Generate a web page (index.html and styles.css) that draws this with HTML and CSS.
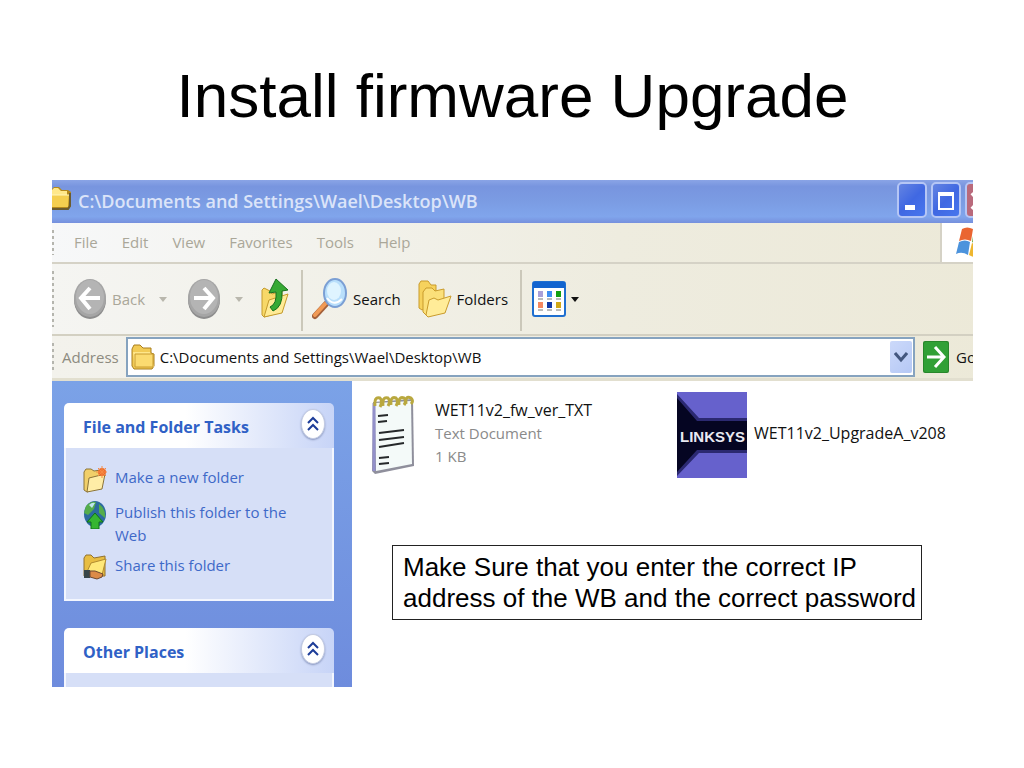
FILE: index.html
```
<!DOCTYPE html>
<html lang="en">
<head>
  <meta charset="UTF-8">
  <meta name="viewport" content="width=device-width, initial-scale=1">
  <title>Install firmware Upgrade</title>
  <link rel="stylesheet" href="styles.css">
</head>
<body>
  <h1>Install firmware Upgrade</h1>

  <main class="window">
    <header class="title-bar">
      <svg class="title-icon" width="20" height="26" viewBox="0 0 20 26">
        <path d="M0 3 L2 1 H7 L10 4 H16 L19 6 V20 L17 23 H0Z" fill="#b58a1c"/>
        <path d="M0 4 L2 2 H6 L9 5 H15 V9 H0Z" fill="#ffe88a"/>
        <path d="M0 9 H17 L16 21 H0Z" fill="#f5cf4f"/>
        <path d="M0 9 H17" stroke="#fff6bb"/>
        <path d="M18 7 V20 L16 23 H0" stroke="#6b5c30" stroke-width="2" fill="none"/>
      </svg>
      <h2>C:\Documents and Settings\Wael\Desktop\WB</h2>
      <div class="window-buttons">
        <button class="win-btn" aria-label="Minimize">
          <svg width="26" height="32" viewBox="0 0 26 32"><rect x="6" y="21" width="10" height="5" fill="#fff"/></svg>
        </button>
        <button class="win-btn" aria-label="Maximize">
          <svg width="26" height="32" viewBox="0 0 26 32"><path d="M6 9 H20 V25 H6Z" fill="none" stroke="#fff" stroke-width="2"/><path d="M5 10 H21" stroke="#fff" stroke-width="4"/></svg>
        </button>
        <button class="win-btn close" aria-label="Close">
          <svg width="26" height="32" viewBox="0 0 26 32"><path d="M5 9 L20 25 M20 9 L5 25" stroke="#fff" stroke-width="4"/></svg>
        </button>
      </div>
    </header>

    <nav class="menu-bar">
      <span class="grip"></span>
      <button>File</button>
      <button>Edit</button>
      <button>View</button>
      <button>Favorites</button>
      <button>Tools</button>
      <button>Help</button>
      <div class="flag">
        <svg width="36" height="34" viewBox="0 0 36 34">
          <path d="M6 3 Q11 0 17 3 L15 15 Q9 12 3 15Z" fill="#ea6531"/>
          <path d="M18 4 Q24 7 30 4 L28 16 Q22 19 16 16Z" fill="#6faa3e"/>
          <path d="M3 16 Q9 13 14 16 L12 29 Q6 25 0 28Z" fill="#4c93dc"/>
          <path d="M16 17 Q22 20 28 17 L26 29 Q19 33 13 29Z" fill="#eeb62f"/>
        </svg>
      </div>
    </nav>

    <div class="toolbar">
      <span class="grip"></span>
      <button class="tool back" disabled>
        <svg width="34" height="42" viewBox="0 0 34 42">
          <ellipse cx="17" cy="22" rx="16" ry="19" fill="#8d8d8d"/>
          <ellipse cx="17" cy="20" rx="16" ry="19" fill="#a5a5a5"/>
          <ellipse cx="17" cy="19" rx="14" ry="17" fill="#b4b4b4"/>
          <path d="M27 20 H9 M17 10 L8 20 L17 31" stroke="#fff" stroke-width="4" fill="none"/>
        </svg>
        Back
        <span class="arrow"></span>
      </button>
      <button class="tool forward" aria-label="Forward" disabled>
        <svg width="34" height="42" viewBox="0 0 34 42">
          <ellipse cx="17" cy="22" rx="16" ry="19" fill="#8d8d8d"/>
          <ellipse cx="17" cy="20" rx="16" ry="19" fill="#a5a5a5"/>
          <ellipse cx="17" cy="19" rx="14" ry="17" fill="#b4b4b4"/>
          <path d="M7 20 H25 M17 10 L26 20 L17 31" stroke="#fff" stroke-width="4" fill="none"/>
        </svg>
        <span class="arrow"></span>
      </button>
      <button class="tool up" aria-label="Up">
        <svg width="28" height="42" viewBox="0 0 28 42">
          <path d="M1 12 L3 10 L9 13 L11 16 L21 13 V34 L3 39 L1 37Z" fill="#f7d868" stroke="#c49a2c"/>
          <path d="M3 39 L8 22 L27 16 L21 35Z" fill="#ffeb96" stroke="#c49a2c"/>
          <path d="M15 1 L27 12 L21 13 Q22 29 12 33 L9 29 Q16 26 15 14 L8 15Z" fill="#37a934" stroke="#16701c"/>
        </svg>
      </button>
      <span class="separator"></span>
      <button class="tool search">
        <svg width="36" height="42" viewBox="0 0 36 42">
          <path d="M14 26 L3 38" stroke="#a3603a" stroke-width="6" stroke-linecap="round"/>
          <path d="M13 26 L3 37" stroke="#f19a55" stroke-width="4" stroke-linecap="round"/>
          <ellipse cx="23" cy="15" rx="11" ry="14" fill="#b9dffb" stroke="#7b9fd4" stroke-width="2"/>
          <ellipse cx="22" cy="13" rx="7" ry="9" fill="#dff4ff"/>
          <path d="M15 20 Q22 29 30 21" stroke="#fff" stroke-width="2" fill="none"/>
        </svg>
        Search
      </button>
      <button class="tool folders">
        <svg width="34" height="38" viewBox="0 0 34 38">
          <g stroke="#c99b2c">
            <path d="M1 4 L3 1 H10 L13 5 H18 V24 L4 30 L1 28Z" fill="#f6d25d"/>
            <path d="M5 12 L8 8 H14 L17 11 L26 9 V28 L8 35 L5 32Z" fill="#fbe07a"/>
            <path d="M8 35 L11 20 L16 18 L20 20 L33 16 L27 33 L10 37Z" fill="#ffec98"/>
          </g>
        </svg>
        Folders
      </button>
      <span class="separator"></span>
      <button class="tool views" aria-label="Views">
        <svg width="34" height="36" viewBox="0 0 34 36">
          <rect x="1" y="1" width="32" height="34" rx="2" fill="#fff" stroke="#1f6fd0" stroke-width="2"/>
          <path d="M1 4 H33" stroke="#1264cf" stroke-width="6"/>
          <rect x="6" y="10" width="5" height="6" fill="#a9a0d8"/>
          <rect x="15" y="10" width="5" height="6" fill="#3d8df0"/>
          <rect x="24" y="10" width="5" height="6" fill="#12a012"/>
          <rect x="6" y="21" width="5" height="6" fill="#f58860"/>
          <rect x="15" y="21" width="5" height="6" fill="#123aa8"/>
          <rect x="24" y="21" width="5" height="6" fill="#d1a818"/>
          <path d="M6 18 H11 M15 18 H20 M24 18 H29 M6 29 H11 M15 29 H20 M24 29 H29" stroke="#777"/>
        </svg>
        <span class="arrow"></span>
      </button>
    </div>

    <form class="address-bar">
      <span class="grip"></span>
      <label for="address">Address</label>
      <div class="address-box">
        <svg width="24" height="26" viewBox="0 0 24 26">
          <path d="M1 5 L3 1 H9 L12 4 H20 V9 L23 10 V22 L21 25 H3 L1 22Z" fill="#f2cb55" stroke="#a97e1e"/>
          <path d="M2 8 H19 L23 23 H4Z" fill="#ffe78b"/>
          <path d="M4 10 H22 V23 H4Z" fill="#fbdb70" stroke="#c99c30"/>
        </svg>
        <input id="address" type="text" value="C:\Documents and Settings\Wael\Desktop\WB">
        <button class="drop" type="button" aria-label="Show addresses">
          <svg width="14" height="12" viewBox="0 0 14 12"><path d="M1 2 L7 9 L13 2" stroke="#43577f" stroke-width="3" fill="none"/></svg>
        </button>
      </div>
      <button class="go" type="button">
        <svg width="26" height="32" viewBox="0 0 26 32">
          <rect width="26" height="32" rx="2" fill="#28872b"/>
          <rect x="1" y="1" width="24" height="30" rx="2" fill="#31a036"/>
          <path d="M4 16 H20 M12 6 L21 16 L12 26" stroke="#fff" stroke-width="3" fill="none"/>
        </svg>
        Go
      </button>
    </form>

    <div class="content">
      <aside class="sidebar">
        <section class="panel">
          <div class="panel-head">
            <h3>File and Folder Tasks</h3>
            <button class="collapse" aria-label="Collapse File and Folder Tasks">
              <svg width="12" height="16" viewBox="0 0 12 16"><path d="M1 7 L6 2 L11 7 M1 14 L6 9 L11 14" stroke="#1c3c98" stroke-width="2" fill="none"/></svg>
            </button>
          </div>
          <ul class="tasks">
            <li>
              <svg width="24" height="27" viewBox="0 0 24 27">
                <path d="M1 6 L3 3 H8 L11 5 L18 4 V20 L4 26 L1 24Z" fill="#f1cf69" stroke="#8c7438"/>
                <path d="M4 26 L6 12 L22 8 L19 23Z" fill="#ffeda6" stroke="#8c7438"/>
                <circle cx="19" cy="6" r="4" fill="#ee6b2c"/>
                <path d="M19 0 V12 M13 6 H24 M15 2 L23 10 M23 2 L15 10" stroke="#f58a43"/>
              </svg>
              <a href="#">Make a new folder</a>
            </li>
            <li>
              <svg width="24" height="28" viewBox="0 0 24 28">
                <ellipse cx="12" cy="13" rx="11" ry="13" fill="#2d6b9f"/>
                <path d="M3 5 Q8 0 13 1 L11 8 L5 14 L1 12Z M16 3 Q23 8 22 17 L16 12Z" fill="#55ad4b"/>
                <path d="M6 4 Q9 1 12 2 L9 7Z" fill="#bfe5ef"/>
                <path d="M12 12 L20 21 H16 V28 H8 V21 H4Z" fill="#36b631" stroke="#11701a"/>
              </svg>
              <a href="#">Publish this folder to the Web</a>
            </li>
            <li>
              <svg width="24" height="27" viewBox="0 0 24 27">
                <path d="M1 4 L3 1 H8 L11 4 L22 2 V22 H1Z" fill="#e8bd42" stroke="#927330"/>
                <path d="M3 20 L8 9 L23 5 L19 21Z" fill="#ffe879" stroke="#b28c30"/>
                <path d="M1 16 H7 V24 H1Z" fill="#38464a"/>
                <path d="M7 17 H12 L20 20 L19 23 L14 25 L7 23Z" fill="#dc8b48" stroke="#6d4930"/>
              </svg>
              <a href="#">Share this folder</a>
            </li>
          </ul>
        </section>

        <section class="panel">
          <div class="panel-head">
            <h3>Other Places</h3>
            <button class="collapse" aria-label="Collapse Other Places">
              <svg width="12" height="16" viewBox="0 0 12 16"><path d="M1 7 L6 2 L11 7 M1 14 L6 9 L11 14" stroke="#1c3c98" stroke-width="2" fill="none"/></svg>
            </button>
          </div>
          <ul class="tasks"></ul>
        </section>
      </aside>

      <div class="files">
        <div class="file-list">
          <div class="file">
            <svg width="44" height="80" viewBox="0 0 44 80">
              <path d="M2 7 L42 4 L43 71 L4 79 L1 76Z" fill="#8f8f9c"/>
              <path d="M4 8 L40 6 L41 69 L5 76Z" fill="#f4faf9"/>
              <path d="M3 8 V76" stroke="#9290ca" stroke-width="3"/>
              <path d="M4 11 Q3 1 9 3 Q12 6 9 12 M12 11 Q11 1 17 3 Q20 6 17 11 M20 10 Q19 1 25 3 Q28 6 25 11 M28 10 Q27 1 33 3 Q36 6 33 10 M35 9 Q34 0 40 3 Q43 6 40 9" stroke="#b9a83f" stroke-width="3" fill="none"/>
              <path d="M7 21 L17 20 M7 27 L16 26 M8 38 L33 35 M8 45 L33 42 M8 52 L33 48 M8 63 L18 62 M8 69 L18 68" stroke="#25282a" stroke-width="2"/>
            </svg>
            <p>WET11v2_fw_ver_TXT<br><small>Text Document<br>1 KB</small></p>
          </div>
          <div class="file app">
            <svg width="70" height="86" viewBox="0 0 70 86">
              <rect width="70" height="86" fill="#6661cc"/>
              <path d="M0 2 L22 26 H70 V61 H22 L0 84Z" fill="#2b2971"/>
              <path d="M0 6 L20 29 H70 V58 H20 L0 80Z" fill="#050522"/>
              <text x="3" y="50" class="logo-text">LINKSYS</text>
            </svg>
            <p>WET11v2_UpgradeA_v208</p>
          </div>
        </div>
        <p class="note">Make Sure that you enter the correct IP address of the WB and the correct password</p>
      </div>
    </div>
  </main>
</body>
</html>
```
FILE: styles.css
```
* {
  box-sizing: border-box;
}

body {
  margin: 0;
  padding: 0 51px 80px 52px;
  background: #fff;
  font-family: "Liberation Sans", Arial, sans-serif;
}

h1 {
  margin: 0;
  padding: 60px 0 48px;
  font-size: 62px;
  line-height: 72px;
  font-weight: normal;
  text-align: center;
  color: #000;
}

.window {
  overflow: hidden;
  background: #ece9d8;
  font-family: "Open Sans", Tahoma, sans-serif;
  font-size: 15px;
  line-height: 23px;
  color: #111;
}

button {
  padding: 0;
  border: 0;
  background: none;
  font: inherit;
  color: inherit;
  flex-shrink: 0;
}

svg {
  display: block;
  flex-shrink: 0;
}

.grip {
  align-self: stretch;
  width: 2px;
  margin: 7px 0;
  background: repeating-linear-gradient(#b5b5ae 0 3px, transparent 3px 6px);
}

/* the bars run past the right edge and get cut off there */
.title-bar,
.menu-bar,
.toolbar,
.address-bar {
  display: flex;
  align-items: center;
  margin-right: -24px;
}

.title-bar {
  height: 43px;
  background: linear-gradient(#8aa4e6, #7895df 15%, #7b9ce3 50%, #80a5ec 85%, #7690dd);
}

.title-icon {
  margin-bottom: 6px;
}

h2 {
  flex: 1;
  margin: 0 0 0 6px;
  font-size: 18px;
  font-weight: 600;
  color: #dbe4f9;
}

.window-buttons {
  display: flex;
  gap: 4px;
  margin: 0 2px 4px 0;
}

.win-btn {
  width: 30px;
  height: 36px;
  border: 2px solid #b5c6f5;
  border-radius: 5px;
  background: linear-gradient(135deg, #6484e2, #4068e2 50%, #4776ee);
}

.win-btn.close {
  background: #b96a7c;
}

.menu-bar {
  height: 41px;
  border-bottom: 2px solid #d5d2c6;
  background: linear-gradient(90deg, #f7f8f9, #eeecdf 60%, #ece9d8);
  color: #aaa799;
  gap: 24px;
}

.menu-bar .grip {
  margin-right: -4px;
}

.flag {
  display: flex;
  align-items: center;
  align-self: stretch;
  width: 57px;
  margin-left: auto;
  padding-left: 14px;
  border-left: 2px solid #d5d2c6;
  background: #fff;
}

.toolbar {
  height: 72px;
  border-bottom: 2px solid #d3d0c2;
  background: linear-gradient(90deg, #f5f5f2, #eeecdf 60%, #ece9d8);
}

.tool {
  display: flex;
  align-items: center;
  gap: 5px;
}

.tool:disabled {
  color: #aaa799;
}

.back {
  margin-left: 19px;
}

.arrow {
  border: 4px solid transparent;
  border-top: 5px solid #111;
  border-bottom: 0;
}

.tool:disabled .arrow {
  margin-left: 9px;
  border-top-color: #b9b7ad;
}

.forward {
  margin-left: 20px;
}

.up {
  margin-left: 18px;
}

.separator {
  align-self: stretch;
  width: 2px;
  margin: 6px 9px 3px 12px;
  background: #cbc8ba;
}

.folders {
  margin-left: 17px;
}

.separator + .views {
  margin-left: 1px;
}

.address-bar {
  height: 45px;
  border-bottom: 3px solid #e2dfcf;
  background: linear-gradient(90deg, #f3f2ec, #ece9d8);
}

.address-bar label {
  margin: 0 7px 0 8px;
  color: #8d8b80;
}

.address-box {
  display: flex;
  flex: 1;
  align-items: center;
  height: 40px;
  padding: 0 1px 0 3px;
  border: 2px solid #86a3bf;
  background: #fff;
}

.address-box input {
  flex: 1;
  min-width: 0;
  padding: 0 0 0 5px;
  border: 0;
  outline: 0;
  background: none;
  font: inherit;
  color: #111;
}

.drop {
  display: flex;
  align-items: center;
  justify-content: center;
  width: 22px;
  height: 32px;
  border-radius: 2px;
  background: linear-gradient(135deg, #ccd9fa, #b5c8f5);
}

.go {
  display: flex;
  align-items: center;
  gap: 7px;
  width: 82px;
  padding-left: 8px;
}

.content {
  display: flex;
  background: #fff;
}

.sidebar {
  display: flex;
  flex-direction: column;
  gap: 27px;
  width: 300px;
  padding: 22px 18px 0 12px;
  background: linear-gradient(#7ba2e7, #6e8cdd);
}

.panel-head {
  display: flex;
  align-items: center;
  justify-content: space-between;
  height: 45px;
  padding: 0 9px 0 19px;
  border-radius: 5px 5px 0 0;
  background: linear-gradient(90deg, #fff 45%, #c7d4f7);
}

h3 {
  margin: 4px 0 0;
  font-size: 16px;
  font-weight: 700;
  color: #2f61c6;
}

.collapse {
  display: flex;
  align-items: center;
  justify-content: center;
  width: 24px;
  height: 30px;
  margin-bottom: 4px;
  border: 1px solid #c3cbe2;
  border-radius: 50%;
  background: #fff;
  box-shadow: 0 1px 2px #8795bd;
}

.tasks {
  display: flex;
  flex-direction: column;
  gap: 7px;
  min-height: 14px;
  margin: 0;
  padding: 0 30px 0 17px;
  border: 2px solid #f3f6fe;
  border-top: 0;
  background: #d6dff7;
  list-style: none;
}

.tasks li {
  display: flex;
  gap: 8px;
}

.tasks li:first-child {
  margin: 18px 0 5px;
}

.tasks li:last-child {
  margin-bottom: 22px;
}

.tasks svg {
  margin-bottom: -4px;
}

.tasks a {
  color: #3e69c8;
  text-decoration: none;
}

.panel:last-child .tasks {
  border-bottom: 0;
}

.files {
  flex: 1;
  min-width: 0;
  padding: 11px 0 0 19px;
}

.file-list {
  display: grid;
  grid-template-columns: 306px 1fr;
  align-items: center;
}

.file {
  display: flex;
  align-items: center;
  gap: 20px;
}

.file.app {
  gap: 7px;
}

.file p {
  margin: 0 0 4px;
  font-size: 16px;
}

.file small {
  font-size: 15px;
  color: #8a8a8a;
}

.logo-text {
  fill: #e9e9f2;
  font-family: "Liberation Sans Narrow", "Liberation Sans", Arial, sans-serif;
  font-size: 15px;
  font-weight: bold;
}

.note {
  max-width: 530px;
  margin: 67px 0 0 21px;
  padding: 6px 0 5px 10px;
  border: 1px solid #222;
  background: #fff;
  font-family: "Liberation Sans", Arial, sans-serif;
  font-size: 26px;
  line-height: 31px;
  color: #000;
}
```
